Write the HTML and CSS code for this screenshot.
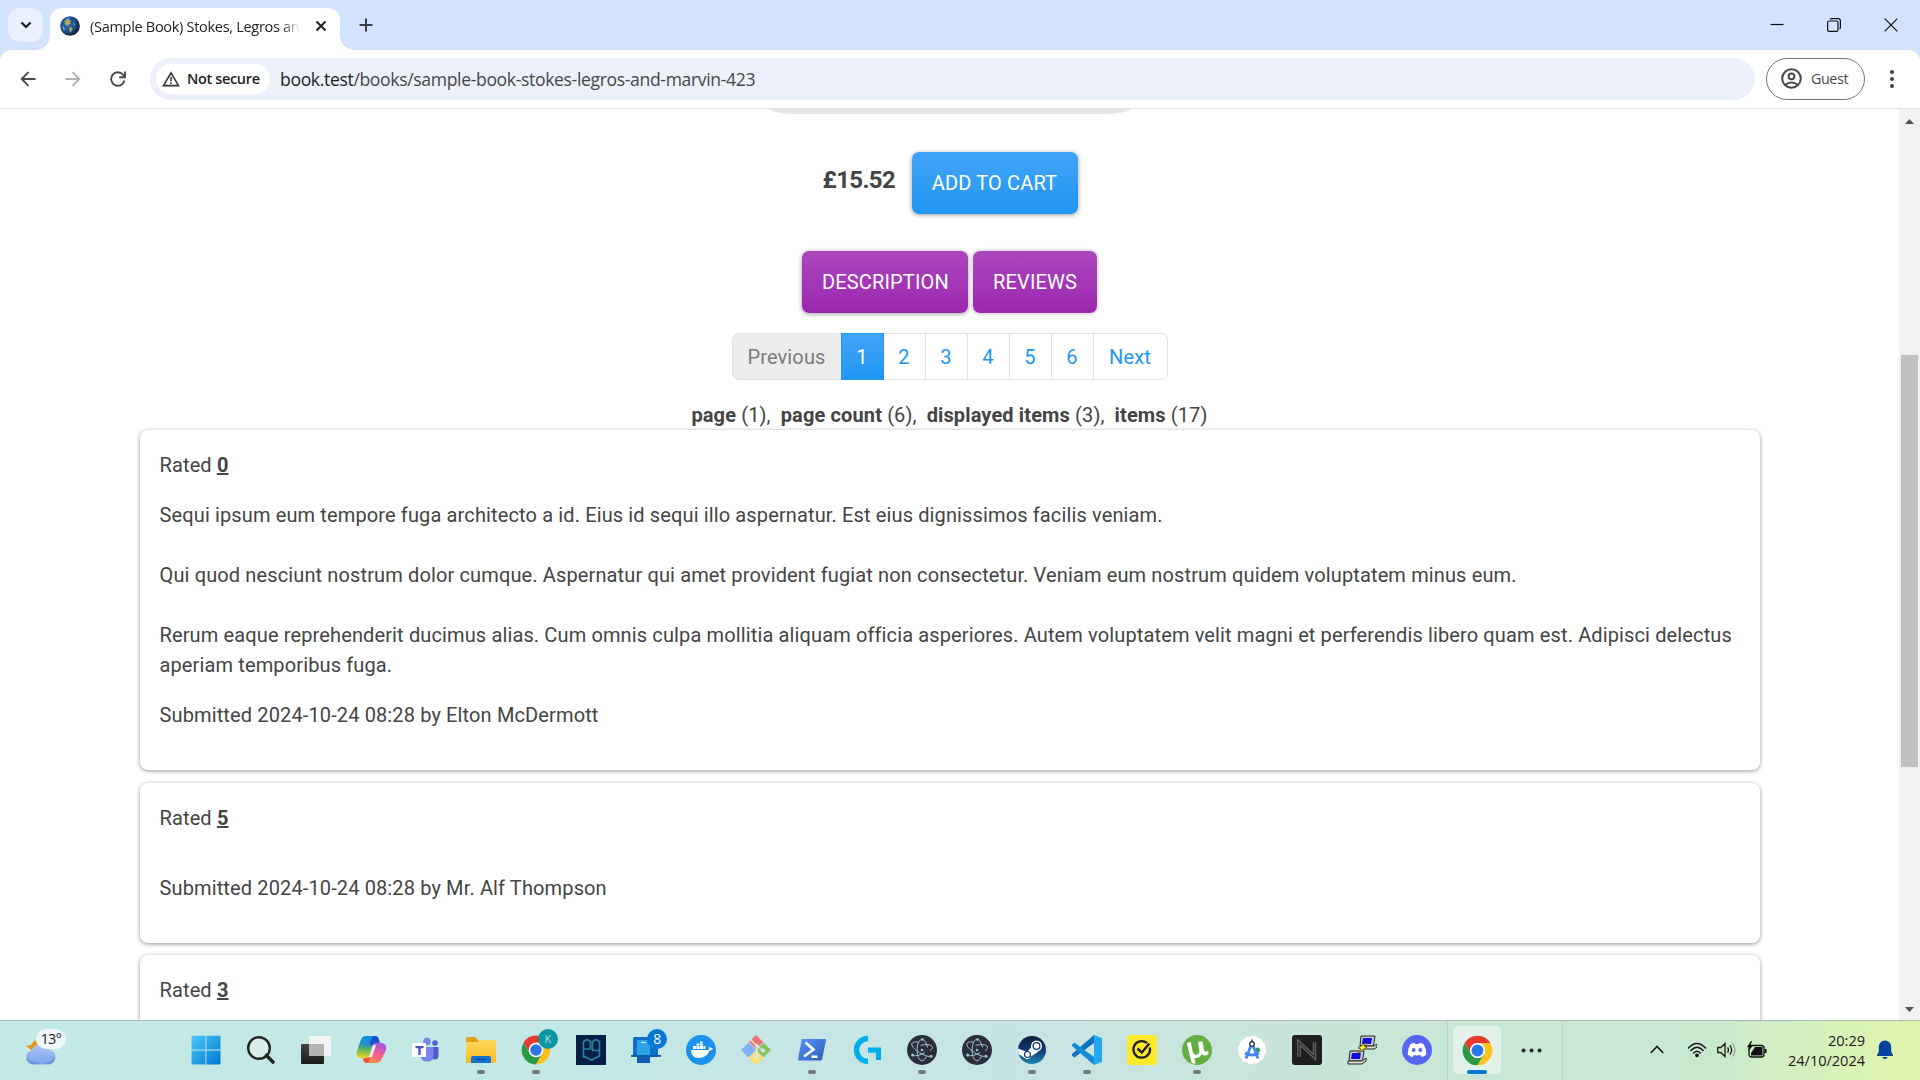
FILE: index.html
```html
<!DOCTYPE html>
<html lang="en">
<head>
<meta charset="utf-8">
<title>(Sample Book) Stokes, Legros and Marvin</title>
<link rel="stylesheet" href="styles.css">
</head>
<body>
<svg class="defs" width="0" height="0" aria-hidden="true">
  <defs>
    <linearGradient id="win" x1="0" y1="0" x2="1" y2="1"><stop offset="0" stop-color="#4cc9f7"/><stop offset="1" stop-color="#0078d4"/></linearGradient>
    <linearGradient id="folder" x1="0" y1="0" x2="0" y2="1"><stop offset="0" stop-color="#ffd75e"/><stop offset="1" stop-color="#fbb91f"/></linearGradient>
    <linearGradient id="tv" x1="0" y1="0" x2="0" y2="1"><stop offset="0" stop-color="#444"/><stop offset="1" stop-color="#1b1b1b"/></linearGradient>
    <linearGradient id="cpA" x1="0.3" y1="0" x2="0.2" y2="1"><stop offset="0" stop-color="#0b8fe8"/><stop offset=".35" stop-color="#2090c8"/><stop offset=".6" stop-color="#5fb356"/><stop offset="1" stop-color="#f5d21c"/></linearGradient>
    <linearGradient id="cpB" x1="0.8" y1="0" x2="0.4" y2="1"><stop offset="0" stop-color="#a054ee"/><stop offset=".5" stop-color="#ee5a93"/><stop offset="1" stop-color="#ff8b45"/></linearGradient>
    <linearGradient id="steam" x1="0" y1="0" x2="0" y2="1"><stop offset="0" stop-color="#101c3c"/><stop offset=".5" stop-color="#123a70"/><stop offset="1" stop-color="#1a86b8"/></linearGradient>
    <linearGradient id="ps" x1="0" y1="0" x2="1" y2="1"><stop offset="0" stop-color="#5391fe"/><stop offset="1" stop-color="#2f5fb4"/></linearGradient>
    <linearGradient id="cloud" x1="0" y1="0" x2="0" y2="1"><stop offset="0" stop-color="#a9c6f7"/><stop offset="1" stop-color="#7ba4e8"/></linearGradient>
    <symbol id="chrome" viewBox="0 0 48 48">
      <circle cx="24" cy="24" r="23" fill="#fff"/>
      <path d="M4.08 12.5A23 23 0 0 1 43.92 12.5H24A11.5 11.5 0 0 0 14.04 29.75Z" fill="#e33b2e"/>
      <path d="M43.92 12.5A23 23 0 0 1 24 47L33.96 29.75A11.5 11.5 0 0 0 24 12.5Z" fill="#fcc31e"/>
      <path d="M24 47A23 23 0 0 1 4.08 12.5L14.04 29.75A11.5 11.5 0 0 0 33.96 29.75Z" fill="#2a9a47"/>
      <circle cx="24" cy="24" r="11.5" fill="#fff"/><circle cx="24" cy="24" r="9.2" fill="#2b76e8"/>
    </symbol>
    <symbol id="electron" viewBox="0 0 30 30">
      <circle cx="15" cy="15" r="15" fill="#2b2e3a"/>
      <g fill="none" stroke="#9fc6cc" stroke-width="1">
        <path d="M11.500 7.200C7.500 6.500 5 7.200 4.800 9c-.3 2.500 4 6.700 9.500 9.700 4 2.200 7.700 3.100 9.700 2.600"/>
        <path d="M13.500 10.300C19 9.200 24 9.600 25.200 11.300c.8 1.200-.2 2.800-2.300 4.400M18 17.700C12.500 20.500 7 21.500 5.300 20.200"/>
        <path d="M20.500 12.500C19.300 7.700 17.200 4.300 15 4.300c-2.700 0-4.900 4.900-4.900 10.900S12.300 25.800 15 25.800c1.800 0 3.400-1.900 4.300-4.600"/>
      </g>
      <g fill="#9fc6cc"><circle cx="15" cy="15" r="1.300"/><circle cx="5.600" cy="20" r="1.500"/><circle cx="24" cy="21.200" r="1.500"/><circle cx="15.500" cy="4.500" r="1.300"/></g>
    </symbol>
  </defs>
</svg>

<header class="tabstrip">
  <button class="tab-search" aria-label="Search tabs"><svg width="12" height="12" viewBox="0 0 12 12"><path d="M1.500 3.500 6 8l4.500-4.500" fill="none" stroke="#1f1f1f" stroke-width="2.200"/></svg></button>
  <div class="tab">
    <svg class="favicon" width="20" height="20" viewBox="0 0 20 20"><defs><radialGradient id="globe" cx=".38" cy=".4" r=".62"><stop offset="0" stop-color="#2f6fb4"/><stop offset=".65" stop-color="#1c4a85"/><stop offset="1" stop-color="#141c30"/></radialGradient></defs><circle cx="10" cy="10" r="9.800" fill="url(#globe)"/><path d="M4.500 5c1.500-1.500 4-2 5-1l1.500 1-1 1.500 1 1-2.500 1-1 1.500-1.500-1L5 8zM9.500 11l2 .500 1.500 1-1.500 2-1 2-1-2z" fill="#b5a95e"/><path d="M2 10l2 1 1 3-1 1zM6 3l3-1 1 1-3 1zM13 7l2 1-1 2z" fill="#88a8bd"/></svg>
    <span class="tab-title">(Sample Book) Stokes, Legros an</span>
    <svg class="tab-close" width="12" height="12" viewBox="0 0 12 12"><path d="M1.500 1.500l9 9M10.500 1.500l-9 9" stroke="#1f1f1f" stroke-width="2"/></svg>
  </div>
  <svg class="new-tab" width="14" height="14" viewBox="0 0 14 14"><path d="M7 .5v13M.5 7h13" stroke="#3c3f43" stroke-width="2"/></svg>
  <div class="window-controls">
    <svg width="14" height="14" viewBox="0 0 14 14"><path d="M.5 6.500h13" stroke="#111" stroke-width="1.200"/></svg>
    <svg width="14" height="14" viewBox="0 0 14 14"><rect x=".6" y="3" width="10.400" height="10.400" rx="1.500" fill="none" stroke="#111" stroke-width="1.200"/><path d="M3 1.200Q3.500.6 4.500.6H11Q13.400.6 13.400 3v6.500q0 1-.8 1.500" fill="none" stroke="#111" stroke-width="1.200"/></svg>
    <svg width="14" height="14" viewBox="0 0 14 14"><path d="M.7.7l12.600 12.600M13.300.7L.7 13.300" stroke="#111" stroke-width="1.200"/></svg>
  </div>
</header>

<nav class="toolbar">
  <div class="nav-buttons">
    <svg width="16" height="16" viewBox="0 0 16 16"><path d="M15.500 8H2M8.500 1.200 1.700 8l6.800 6.800" fill="none" stroke="#46494d" stroke-width="1.900"/></svg>
    <svg width="16" height="16" viewBox="0 0 16 16"><path d="M.5 8H14M7.500 1.200 14.300 8l-6.800 6.800" fill="none" stroke="#b0b0b0" stroke-width="1.900"/></svg>
    <svg width="16" height="16" viewBox="0 0 16 16"><path d="M14.400 9.500A6.700 6.700 0 1 1 13 3.700L14.500 5.500" fill="none" stroke="#46494d" stroke-width="1.900"/><path d="M15 .5V6.300H9.200" fill="none" stroke="#46494d" stroke-width="1.900"/></svg>
  </div>
  <div class="omnibox">
    <span class="security-chip"><svg width="18" height="16" viewBox="0 0 18 16"><path d="M9 1.800 16.500 14.600H1.500z" fill="none" stroke="#333" stroke-width="1.600"/><path d="M9 6v4.200M9 11.300v1.700" stroke="#333" stroke-width="1.500"/></svg><span>Not secure</span></span>
    <span class="url"><b>book.test</b>/books/sample-book-stokes-legros-and-marvin-423</span>
  </div>
  <div class="profile"><svg width="21" height="21" viewBox="0 0 21 21"><g fill="none" stroke="#46494d" stroke-width="2"><circle cx="10.500" cy="10.500" r="9.300"/><circle cx="10.500" cy="8.300" r="2.900"/><path d="M4 17q6.500-5 13 0"/></g></svg><span>Guest</span></div>
  <svg class="menu-dots" width="4" height="18" viewBox="0 0 4 18"><g fill="#3c3f43"><circle cx="2" cy="2" r="2"/><circle cx="2" cy="9" r="2"/><circle cx="2" cy="16" r="2"/></g></svg>
</nav>

<div class="viewport">
  <main class="page">
    <div class="cover-edge"></div>
    <div class="buy"><span class="price">£15.52</span><button class="btn btn-primary">Add to cart</button></div>
    <div class="sections"><button class="btn btn-secondary">Description</button><button class="btn btn-secondary btn-focus">Reviews</button></div>
    <ul class="pagination">
      <li class="disabled prev">Previous</li><li class="active">1</li><li>2</li><li>3</li><li>4</li><li>5</li><li>6</li><li class="next">Next</li>
    </ul>
    <div class="stats"><span><b>page</b> (1),</span><span><b>page count</b> (6),</span><span><b>displayed items</b> (3),</span><span><b>items</b> (17)</span></div>
    <div class="reviews">
      <article class="card">
        <p>Rated <strong>0</strong></p>
        <p>Sequi ipsum eum tempore fuga architecto a id. Eius id sequi illo aspernatur. Est eius dignissimos facilis veniam.<br><br>Qui quod nesciunt nostrum dolor cumque. Aspernatur qui amet provident fugiat non consectetur. Veniam eum nostrum quidem voluptatem minus eum.<br><br>Rerum eaque reprehenderit ducimus alias. Cum omnis culpa mollitia aliquam officia asperiores. Autem voluptatem velit magni et perferendis libero quam est. Adipisci delectus aperiam temporibus fuga.</p>
        <p>Submitted 2024-10-24 08:28 by Elton McDermott</p>
      </article>
      <article class="card">
        <p>Rated <strong>5</strong></p>
        <p></p>
        <p>Submitted 2024-10-24 08:28 by Mr. Alf Thompson</p>
      </article>
      <article class="card">
        <p>Rated <strong>3</strong></p>
        <p></p>
      </article>
    </div>
  </main>
  <div class="scrollbar">
    <svg width="9" height="5" viewBox="0 0 9 5"><path d="M0 5 4.500 0 9 5z" fill="#505050"/></svg>
    <div class="thumb"></div>
    <svg class="down" width="9" height="5" viewBox="0 0 9 5"><path d="M0 0 4.500 5 9 0z" fill="#505050"/></svg>
  </div>
</div>

<footer class="taskbar">
  <div class="weather">
    <svg width="32" height="26" viewBox="0 0 32 26"><path d="M1 7l5-1 4-5 4 4 4-2v8H6z" fill="#e8951c"/><path d="M7.500 25.500a7 7 0 0 1-1-13.800 9.500 9.500 0 0 1 17.600-1 7.500 7.500 0 0 1 0 14.800z" fill="url(#cloud)"/><path d="M2 20q4 5 12 4.500M20 24q8 1 9.500-5" fill="none" stroke="#688fd4" stroke-width="1.500"/></svg>
    <span class="temp">13°</span>
  </div>
  <div class="apps">
    <div class="app"><svg width="30" height="30" viewBox="0 0 30 30"><path d="M.5 1.500q0-.8.800-.8H14.400V14.400H.5zM15.400.7h13.300q.8 0 .8.800V14.400H15.400zM.5 15.400H14.400V29.500H1.300q-.8 0-.8-.8zM15.400 15.400H29.500V28.700q0 .8-.8.8H15.400z" fill="url(#win)"/></svg></div>
    <div class="app"><svg width="30" height="30" viewBox="0 0 30 30"><circle cx="13" cy="13" r="10.800" fill="#dcecea" stroke="#262626" stroke-width="2.400"/><path d="M20.500 20.500l6.500 6.500" stroke="#262626" stroke-width="3.600" stroke-linecap="round"/></svg></div>
    <div class="app"><svg width="30" height="30" viewBox="0 0 30 30"><rect y="9" width="23" height="20" rx="1" fill="url(#tv)"/><rect x="8" y="1" width="22" height="20" rx="1" fill="#f4f4f4"/><path d="M8 9h15v12H8z" fill="#b4b4b4"/></svg></div>
    <div class="app"><svg width="30" height="30" viewBox="0 0 30 30"><path d="M10 1h9c2 0 3 1 3.700 3l1 3h-3c-3 0-4 2-5 5l-2 7c-1 3-2 4-5 4H5c-4 0-5-3-4-7L5 4.500Q6.200 1 10 1z" fill="url(#cpA)"/><path d="M17 1h2c2 0 3 1 3.700 3l1 4h-3c-3 0-4 1.500-5 4L14 7z" fill="#174fc4"/><path d="M20 28h-9c-2 0-3-1-3.700-3L6.500 23H9c3 0 4-1 5-4l2-7c1-3 2-4 5-4h4c4 0 6 3 5 7l-5 10Q23.500 28 20 28z" fill="url(#cpB)"/><path d="M13 22l4-12h3l-4 12z" fill="#dff0ec"/><path d="M9 23h5l-2 5c-3 0-4-1-4.700-3z" fill="#ee4e2f"/></svg></div>
    <div class="app"><svg width="30" height="30" viewBox="0 0 30 30"><circle cx="16" cy="6.500" r="3.800" fill="#7b83eb"/><circle cx="24" cy="8" r="2.800" fill="#5059c9"/><path d="M19 12h8.500v9q0 3.500-4 3.500T19 21z" fill="#5059c9"/><path d="M9.500 12h13v9q0 5.500-6.200 5.500T9.500 21z" fill="#7b83eb"/><rect x="1" y="8" width="14" height="14" fill="#fff"/><path d="M4.500 11h8v2.200H9.700V20H7.300v-6.800H4.500z" fill="#4b53bc"/></svg></div>
    <div class="app running"><svg width="30" height="30" viewBox="0 0 30 30"><path d="M0 3.500Q0 2 1.500 2H9l3.500 3.500V12H0z" fill="#e0a010"/><path d="M0 7h11l3-2h14.500Q30 5 30 6.500v20q0 1.500-1.500 1.500h-27Q0 28 0 26.500z" fill="url(#folder)"/><path d="M5 28v-5q0-2 2-2h16q2 0 2 2v5z" fill="#1274cf"/><path d="M10 24.500h10" stroke="#0a4c94" stroke-width="1.500"/></svg></div>
    <div class="app running"><svg width="30" height="30"><use href="#chrome"/></svg><span class="badge badge-k">K</span></div>
    <div class="app"><svg width="30" height="30" viewBox="0 0 30 30"><rect width="30" height="30" fill="#071f47"/><path d="M7.500 23V6.500l3.500-2 3.500 2V14H8M23 15.500h-6.500V6.500l3.500-2 3.500 2V21l-8 4-8-4" fill="none" stroke="#25839d" stroke-width="1.600"/></svg></div>
    <div class="app"><svg width="30" height="30" viewBox="0 0 30 30"><rect x="2" y="2" width="25" height="20" rx="1.500" fill="#0f6fc5"/><path d="M0 20h30v1.800H0z" fill="#0a55a0"/><rect x="6" y="5" width="13" height="23" rx="1.200" fill="#2aa1e6"/><path d="M6 20h13v8H6z" fill="#0d5eae"/><path d="M10 7.500h5" stroke="#cfeeff" stroke-width="1.200"/></svg><span class="badge badge-count">8</span></div>
    <div class="app"><svg width="30" height="30" viewBox="0 0 30 30"><circle cx="15" cy="15" r="15" fill="#1d91ee"/><path d="M5 15h17c1 0 1.500-.5 1-2.500q.8-2 1.300 0 .7 1 2.700.7-.5 2-3.500 2.500Q20.500 23 12.500 23 5.500 23 5 15z" fill="#fff"/><path d="M7 11h3v3H7zm3.500 0h3v3h-3zm3.500 0h3v3h-3zm3.500 0h1.800v3h-1.800zM10.500 8.500h3v2h-3zm3.500 0h3v2h-3zM14 6.500h2.500v1.500H14z" fill="#fff"/></svg></div>
    <div class="app"><svg width="30" height="30" viewBox="0 0 30 30"><path d="M15 0 22 7l-7 7-7-7z" fill="#f17070"/><path d="M7.500 7.500 15 15l-7.500 7.500L0 15z" fill="#7fb2f5"/><path d="M22.500 7.500 30 15l-7.500 7.500L15 15z" fill="#8ac35f"/><path d="M15 15.700 22.300 23 15 30l-7.300-7z" fill="#ffdd6e"/><path d="M10 5l6 6v12M16 11l6 4.500" fill="none" stroke="#d8e8e4" stroke-width="1.500"/><g fill="#d8e8e4"><circle cx="16" cy="11" r="2"/><circle cx="22" cy="15.500" r="2"/><circle cx="15" cy="22" r="2"/></g></svg></div>
    <div class="app running"><svg width="30" height="30" viewBox="0 0 30 30"><path d="M5.500 4H28q1.200 0 1 1.200L25 24.500q-.3 1-1.300 1H1.800q-1 0-.8-1L4.500 5q.2-1 1-1z" fill="url(#ps)"/><path d="M8.500 7.500 16.500 14.500 7 21.500M14.500 21.700h6" fill="none" stroke="#fff" stroke-width="2.600"/></svg></div>
    <div class="app"><svg width="30" height="30" viewBox="0 0 30 30"><path d="M16 3.500A11.500 11.500 0 0 0 16 26.500" fill="none" stroke="#00aeea" stroke-width="5.400"/><path d="M16 12.500h13V25h-5v-7.200h-8z" fill="#00aeea"/></svg></div>
    <div class="app running"><svg width="30" height="30"><use href="#electron"/></svg></div>
    <div class="app"><svg width="30" height="30"><use href="#electron"/></svg></div>
    <div class="app running"><svg width="30" height="30" viewBox="0 0 30 30"><circle cx="15" cy="15" r="14" fill="url(#steam)"/><path d="M1 13.500l9 3.500 5-5.500 6 5.500-7 4.500q-2 4-5.500 2L1.500 19z" fill="#fff"/><circle cx="19.500" cy="11" r="5.500" fill="#fff"/><circle cx="19.500" cy="11" r="3.400" fill="none" stroke="#123a70" stroke-width="1.300"/><circle cx="10.500" cy="19.500" r="3" fill="none" stroke="#123a70" stroke-width="1.200"/></svg></div>
    <div class="app running"><svg width="30" height="30" viewBox="0 0 30 30"><path d="M22 0l8 3v24l-8 3z" fill="#25a8f0"/><path d="M22 0 0 19v1.500L2.500 22.500 22 8z" fill="#0f72bd"/><path d="M22 30 0 11V9.500L2.500 7.500 22 22z" fill="#168bd6"/></svg></div>
    <div class="app"><svg width="30" height="30" viewBox="0 0 30 30"><rect width="30" height="30" rx="3.500" fill="#fde92b"/><path d="M20 8A8.300 8.300 0 1 0 22.800 12.500" fill="none" stroke="#222" stroke-width="2.300"/><path d="M10.500 13.500l4.300 4 7.500-9" fill="none" stroke="#222" stroke-width="2.400"/></svg></div>
    <div class="app running"><svg width="30" height="30" viewBox="0 0 30 30"><circle cx="15" cy="15" r="15" fill="#66ae43"/><path d="M9 7l1.500 9q1 4.500 4.500 3.500 3-.8 2.300-4.500L16 7l4.500-.8 1.400 8.300q.5 2.500 2.200 2.200L26 16q1.500 2.500-1 4-3 1.500-5-1-2.500 4.500-7.500 4l1 6-3.800-1L4.800 8z" fill="#fff"/></svg></div>
    <div class="app"><svg width="30" height="30" viewBox="0 0 30 30"><circle cx="15" cy="15" r="13.500" fill="#fff" stroke="#fff" stroke-width="1.500" stroke-dasharray="4 3"/><circle cx="20.500" cy="15" r="2.500" fill="#2d9b52"/><path d="M15 8 9 23.500M15 8l6 15.500M8 18q7 4 14 0" fill="none" stroke="#4285f4" stroke-width="2.800"/><circle cx="15" cy="9" r="2.300" fill="#fff" stroke="#37474f" stroke-width="1.500"/><path d="M15 4.500V7" stroke="#37474f" stroke-width="1.600"/></svg></div>
    <div class="app"><svg width="30" height="30" viewBox="0 0 30 30"><rect width="30" height="30" rx="3" fill="#1f1f1f"/><path d="M7 22V7.500L22.500 22V7.500" fill="none" stroke="#777" stroke-width="3.400"/><path d="M7 22V7.500L22.500 22V7.500" fill="none" stroke="#333" stroke-width="1.700"/></svg></div>
    <div class="app"><svg width="30" height="30" viewBox="0 0 30 30"><g stroke="#222" stroke-width="1"><path d="M14 1h14l-1.500 10H13z" fill="#ccc"/><path d="M13 11h14l3-2v3l-3 2H13z" fill="#ddd"/><path d="M3 16h14l-1.500 10H2z" fill="#ccc"/><path d="M1 26h14l4-3v3l-4 3H1z" fill="#ddd"/></g><path d="M16 3h9l-1 6h-9zM5 18h9l-1 6H4z" fill="#1010e0"/><path d="M20 7l-9 6 3 1-4 5 10-7-3-1z" fill="#ffeb1c" stroke="#222" stroke-width=".6"/></svg></div>
    <div class="app"><svg width="30" height="30" viewBox="0 0 30 30"><circle cx="15" cy="15" r="15" fill="#5865f2"/><path d="M8.300 9.200Q10.500 8 12.500 7.800l.7 1.300h3.600l.7-1.300q2 .2 4.200 1.400 3 5 2.600 10.300-2.500 2-4.800 2.500l-1.200-2q-3.300.8-6.600 0l-1.200 2Q8.200 21.500 5.700 19.500 5.300 14.200 8.300 9.200z" fill="#fff"/><ellipse cx="11.700" cy="15" rx="1.900" ry="2.100" fill="#5865f2"/><ellipse cx="18.300" cy="15" rx="1.900" ry="2.100" fill="#5865f2"/></svg></div>
  </div>
  <div class="current"><div class="tile"><svg width="31" height="31"><use href="#chrome"/></svg></div><svg width="22" height="5" viewBox="0 0 22 5"><g fill="#222"><circle cx="2.500" cy="2.500" r="2"/><circle cx="10.500" cy="2.500" r="2"/><circle cx="18.500" cy="2.500" r="2"/></g></svg></div>
  <div class="tray">
    <svg width="14" height="9" viewBox="0 0 14 9"><path d="M.8 8 7 1.500 13.200 8" fill="none" stroke="#1a1a1a" stroke-width="1.700"/></svg>
    <svg class="wifi" width="20" height="16" viewBox="0 0 20 16"><g fill="none" stroke="#1a1a1a" stroke-width="1.400"><path d="M1 6.500Q10-3.500 19 6.500M3.500 9Q10 1.500 16.500 9M6.200 11.500Q10 7 13.800 11.500"/></g><circle cx="10" cy="13.300" r="1.900" fill="#1a1a1a"/></svg>
    <svg class="volume" width="20" height="16" viewBox="0 0 20 16"><g fill="none" stroke="#1a1a1a" stroke-width="1.300"><path d="M.8 5.500h3L8 1.500v13L3.800 10.500h-3zM10.500 5.500q2 2.500 0 5M12.800 3.500q3.700 4.500 0 9"/><path d="M15.500 1.500q5 6.500 0 13" stroke="#96aa99"/></g></svg>
    <svg class="battery" width="20" height="18" viewBox="0 0 20 18"><rect x="2" y="4.500" width="15" height="11.500" rx="2.500" fill="none" stroke="#111" stroke-width="1.300"/><path d="M4 14.500V12l4-6h7.500v8.500zM17.500 8h2v4h-2zM4 0 0 6h2.500L1.500 10 6 4.500H3.500L5 0z" fill="#111"/></svg>
    <div class="clock"><span>20:29</span><span>24/10/2024</span></div>
    <svg class="bell" width="18" height="20" viewBox="0 0 18 20"><path d="M9 .5a6.200 6.200 0 0 1 6.200 6.200v5L17 15v1H1v-1l1.800-3.300v-5A6.200 6.200 0 0 1 9 .5zM6.300 17h5.400q-.6 2-2.700 2t-2.700-2z" fill="#06419b"/></svg>
  </div>
</footer>
</body>
</html>
```
FILE: styles.css
```css
* { box-sizing: border-box; }
body {
  margin: 0;
  width: 1920px;
  height: 1080px;
  overflow: hidden;
  display: flex;
  flex-direction: column;
  background: #fff;
  font-family: Roboto, sans-serif;
}
svg { display: block; flex: none; }
.defs { position: absolute; }
button { border: 0; padding: 0; font: inherit; }
p { margin: 0; }

/* Tab strip */
.tabstrip {
  flex: none;
  height: 50px;
  display: flex;
  align-items: center;
  padding-left: 8px;
  background: #d3e2fd;
  font-family: "Open Sans", sans-serif;
}
.tab-search {
  width: 35px;
  height: 34px;
  border-radius: 12px;
  background: #e9f1fe;
  display: grid;
  place-items: center;
}
.tab {
  position: relative;
  align-self: flex-end;
  width: 290px;
  height: 42px;
  margin-left: 7px;
  padding: 0 14px 7px 10px;
  display: flex;
  align-items: center;
  background: #fff;
  border-radius: 12px 12px 0 0;
}
.tab::before, .tab::after {
  content: "";
  position: absolute;
  bottom: 0;
  width: 14px;
  height: 14px;
}
.tab::before { left: -14px; background: radial-gradient(circle at 0 0, transparent 13.500px, #fff 14px); }
.tab::after { right: -14px; background: radial-gradient(circle at 100% 0, transparent 13.500px, #fff 14px); }
.tab-title {
  width: 210px;
  margin: 0 16px 0 10px;
  white-space: nowrap;
  font-size: 14.600px;
  letter-spacing: -.34px;
  color: #1f1f1f;
  -webkit-mask-image: linear-gradient(90deg, #000 192px, transparent 210px);
  mask-image: linear-gradient(90deg, #000 192px, transparent 210px);
}
.new-tab { margin-left: 19px; }
.window-controls { margin-left: auto; display: flex; gap: 43px; padding-right: 22px; }

/* Toolbar */
.toolbar {
  flex: none;
  height: 59px;
  display: flex;
  align-items: center;
  padding: 0 26px 1px 20px;
  border-bottom: 1px solid #dfe1e3;
  background: radial-gradient(circle at 12px 12px, #fff 12px, #d3e2fd 12.500px) 0 0 / 12px 12px no-repeat,
    radial-gradient(circle at 0 12px, #fff 12px, #d3e2fd 12.500px) 100% 0 / 12px 12px no-repeat, #fff;
  font-family: "Open Sans", sans-serif;
}
.nav-buttons { display: flex; gap: 29px; width: 130px; }
.omnibox {
  flex: 1;
  height: 42px;
  border-radius: 21px;
  padding-left: 6px;
  background: #ebf0fa;
  display: flex;
  align-items: center;
}
.security-chip {
  width: 114px;
  height: 30px;
  border-radius: 15px;
  background: #fff;
  display: flex;
  align-items: center;
  gap: 7px;
  padding-left: 6px;
  white-space: nowrap;
  font-size: 14.500px;
  font-weight: 600;
  letter-spacing: -.35px;
  color: #1f1f1f;
}
.url { margin-left: 10px; font-size: 17.600px; letter-spacing: -.36px; color: #474747; }
.url b { font-weight: 400; color: #1f1f1f; }
.profile {
  width: 99px;
  height: 42px;
  margin-left: 11px;
  padding-left: 14px;
  border: 1px solid #747775;
  border-radius: 21px;
  display: flex;
  align-items: center;
  gap: 9px;
  font-size: 14.300px;
  letter-spacing: -.4px;
  color: #46494d;
}
.menu-dots { margin-left: 25px; }

/* Page viewport */
.viewport { height: 911px; flex: none; display: flex; overflow: hidden; }
.page { flex: 1; height: 911px; overflow: hidden; color: #444; font-size: 20px; line-height: 30px; letter-spacing: .13px; }
.cover-edge {
  width: 420px;
  height: 100px;
  margin: -95px auto 38px;
  border-radius: 50px;
  background: #e6e6e6;
}
.buy, .sections { display: flex; justify-content: center; }
.buy { margin-bottom: 37px; }
.price {
  width: 71px;
  margin: 13px 18px 0 1px;
  font-size: 24px;
  font-weight: 700;
  letter-spacing: -.6px;
  white-space: nowrap;
}
.btn {
  height: 62px;
  padding: 0 20px;
  border-radius: 7px;
  color: #fff;
  font-size: 20px;
  font-weight: 400;
  letter-spacing: .15px;
  text-transform: uppercase;
  white-space: nowrap;
  box-shadow: 0 1px 5px rgba(0, 0, 0, .4);
}
.btn-primary { width: 166px; background: linear-gradient(#42a4f7, #2196f3); }
.btn-secondary { width: 166px; background: linear-gradient(#ab47bc, #9c27b0); }
.btn-focus { width: 124px; box-shadow: 0 0 0 2px #e4e4e4, 0 0 4px rgba(0, 0, 0, .15); }
.sections { gap: 5px; margin-bottom: 20px; }
.pagination {
  list-style: none;
  margin: 0 0 20px;
  padding: 0 0 0 1px;
  display: flex;
  justify-content: center;
}
.pagination li {
  width: 43px;
  height: 47px;
  margin-left: -1px;
  border: 1px solid #dee2e6;
  display: grid;
  place-items: center;
  color: #2196f3;
}
.pagination .prev { width: 110px; border-radius: 7px 0 0 7px; }
.pagination .next { width: 75px; border-radius: 0 7px 7px 0; }
.pagination .disabled { background: #ececec; color: #7b7b7b; }
.pagination .active { background: linear-gradient(#42a4f7, #2196f3); border-color: #2196f3; color: #fff; z-index: 1; }
.stats { display: flex; justify-content: center; gap: 10px; white-space: nowrap; }
.stats b { font-weight: 700; }
.reviews { width: 1620px; margin: 0 0 0 139.500px; display: flex; flex-direction: column; gap: 12.500px; }
.card {
  padding: 20px 20px 40px;
  display: flex;
  flex-direction: column;
  gap: 20px;
  border-radius: 8px;
  background: #fff;
  box-shadow: 0 1px 4px rgba(0, 0, 0, .42);
}
.card strong { font-weight: 700; text-decoration: underline; }
.scrollbar {
  width: 21px;
  padding: 10px 0 8px;
  background: #f1f1f1;
  display: flex;
  flex-direction: column;
  align-items: center;
}
.thumb { width: 17px; height: 412px; margin-top: 231px; background: #c1c1c1; }
.down { margin-top: auto; }

/* Taskbar */
.taskbar {
  flex: none;
  height: 60px;
  display: flex;
  border-top: 1px solid #a4b8b4;
  background: linear-gradient(90deg, #c3e9e6 0, #c3e8e5 600px, #c7e4e5 1000px, #c9e5d7 1350px, #c8e8d0 1700px, #d5f0bd 1810px, #e0f4ab 1920px);
}
.weather { position: relative; width: 178.500px; padding: 18px 0 0 25px; }
.temp {
  position: absolute;
  left: 36px;
  top: 8px;
  width: 30px;
  height: 20px;
  border-radius: 10px;
  background: #eef6f7;
  text-align: center;
  font: 14px/20px "Open Sans", sans-serif;
  letter-spacing: -.5px;
  color: #1a1a1a;
}
.apps { display: flex; }
.app { position: relative; width: 55.060px; padding-top: 14px; display: flex; justify-content: center; }
.running::after {
  content: "";
  position: absolute;
  left: 23.500px;
  top: 49px;
  width: 8px;
  height: 4px;
  border-radius: 2px;
  background: #747a7a;
}
.badge {
  position: absolute;
  left: 28px;
  top: 8px;
  width: 20px;
  height: 20px;
  border-radius: 50%;
  text-align: center;
  color: #fff;
}
.badge-k { left: 29px; background: #0b96a0; font: 500 11px/20px "Open Sans", sans-serif; color: #b6dce8; }
.badge-count { left: 28.500px; background: #0378d4; font: 14px/19px "Open Sans", sans-serif; }
.current {
  width: 116px;
  margin-left: 2.500px;
  border: solid rgba(120, 150, 135, .2);
  border-width: 0 1px;
  display: flex;
  align-items: center;
  padding-left: 5px;
  gap: 20px;
}
.tile {
  position: relative;
  width: 48px;
  height: 48px;
  margin-bottom: 1px;
  border-radius: 5px;
  background: #e2f2e9;
  display: grid;
  place-items: center;
}
.tile::after {
  content: "";
  position: absolute;
  left: 14px;
  bottom: 0;
  width: 20px;
  height: 4px;
  border-radius: 2px;
  background: #0078d4;
}
.tray { flex: 1; display: flex; align-items: center; padding: 0 26px 2px 87px; }
.wifi { margin-left: 23px; }
.volume { margin-left: 10px; }
.battery { margin-left: 10px; }
.clock {
  flex: 1;
  display: flex;
  flex-direction: column;
  align-items: flex-end;
  font: 14.600px/20px "Open Sans", sans-serif;
  letter-spacing: -.05px;
  color: #1a1a1a;
}
.bell { margin-left: 11px; }
```
